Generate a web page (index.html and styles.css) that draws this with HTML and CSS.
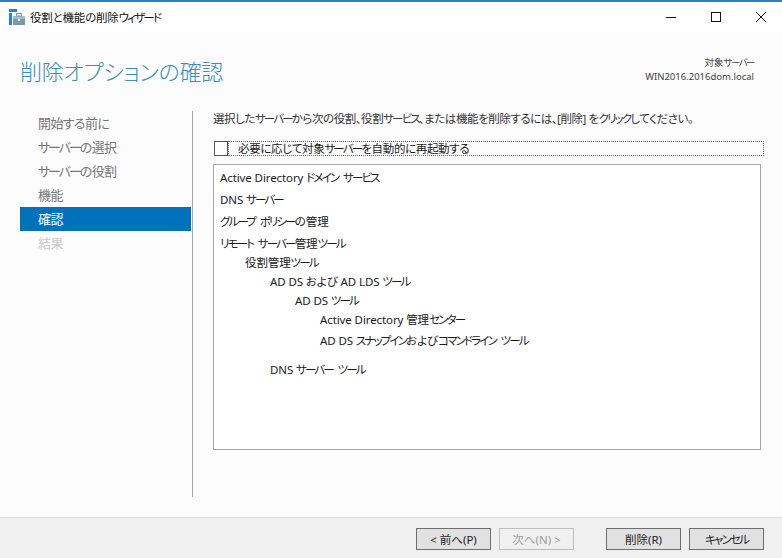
FILE: index.html
```html
<!DOCTYPE html>
<html lang="ja">
<head>
    <meta charset="UTF-8">
    <meta name="viewport" content="width=device-width, initial-scale=1.0">
    <title>役割と機能の削除ウィザード</title>
    <link rel="stylesheet" href="styles.css">
</head>
<body>

    <div class="window">
        <div class="titlebar">
            <svg class="app-icon" width="16" height="16" viewBox="0 0 16 16">
                <rect x="0" y="0" width="8" height="3" fill="#1e88d8"/>
                <rect x="0" y="4" width="3" height="12" fill="#1e88d8"/>
                <rect x="4" y="7" width="12" height="9" fill="#7c98ac"/>
                <rect x="4" y="7" width="12" height="3" fill="#a9bccb"/>
                <rect x="7.5" y="4.5" width="5" height="2.5" fill="none" stroke="#7c98ac"/>
                <rect x="9" y="10" width="2" height="2" fill="#e8eef2"/>
            </svg>
            <span class="window-title">役割と機能の削除<span class="kana">ウィザード</span></span>
            <div class="window-controls">
                <svg width="12" height="12" viewBox="0 0 12 12"><path d="M1 6.5H11" stroke="#111" fill="none"/></svg>
                <svg width="12" height="12" viewBox="0 0 12 12"><rect x="1.5" y="1.5" width="9" height="9" stroke="#111" fill="none"/></svg>
                <svg width="12" height="12" viewBox="0 0 12 12"><path d="M1 1L11 11M11 1L1 11" stroke="#111" fill="none"/></svg>
            </div>
        </div>

        <div class="header">
            <h1>削除オプションの確認</h1>
            <div class="target">
                <div>対象<span class="kana">サーバー</span></div>
                <div>WIN2016.2016dom.local</div>
            </div>
        </div>

        <div class="content">
            <ul class="steps">
                <li>開始する前に</li>
                <li><span class="kana">サーバー</span>の選択</li>
                <li><span class="kana">サーバー</span>の役割</li>
                <li>機能</li>
                <li class="active">確認</li>
                <li class="disabled">結果</li>
            </ul>

            <div class="main">
                <p class="intro">選択した<span class="kana">サーバー</span>から次の役割、役割<span class="kana">サービス</span>、または機能を削除するには、[削除] を<span class="kana">クリック</span>してください。</p>

                <label class="restart">
                    <span class="checkbox"></span>
                    <span class="restart-label">必要に応じて対象<span class="kana">サーバー</span>を自動的に再起動する</span>
                </label>

                <div class="list">
                    <div class="row">Active Directory <span class="kana">ドメイン サービス</span></div>
                    <div class="row">DNS <span class="kana">サーバー</span></div>
                    <div class="row"><span class="kana">グループ ポリシー</span>の管理</div>
                    <div class="row last-top"><span class="kana">リモート サーバー</span>管理<span class="kana">ツール</span></div>
                    <div class="row sub level1">役割管理<span class="kana">ツール</span></div>
                    <div class="row sub level2">AD DS および AD LDS <span class="kana">ツール</span></div>
                    <div class="row sub level3">AD DS <span class="kana">ツール</span></div>
                    <div class="row sub level4">Active Directory 管理<span class="kana">センター</span></div>
                    <div class="row level4 tall">AD DS <span class="kana">スナップイン</span>および<span class="kana">コマンドライン ツール</span></div>
                    <div class="row level2">DNS <span class="kana">サーバー ツール</span></div>
                </div>
            </div>
        </div>

        <div class="footer">
            <button>&lt; 前へ(P)</button>
            <button disabled>次へ(N) &gt;</button>
            <button class="gap">削除(R)</button>
            <button><span class="kana">キャンセル</span></button>
        </div>
    </div>

</body>
</html>
```

FILE: styles.css
```css
* {
    box-sizing: border-box;
}

body {
    margin: 0;
    font-family: "Noto Sans", "Noto Sans CJK JP", sans-serif;
    font-size: 11.5px;
    font-feature-settings: "palt";
    color: #1a1a1a;
    background-color: #fcfcfc;
}

/* katakana runs are much narrower in the original UI font */
.kana {
    letter-spacing: -.16em;
    word-spacing: .3em;
}

.window {
    width: 782px;
    height: 558px;
    display: flex;
    flex-direction: column;
    overflow: hidden;
}

.titlebar {
    height: 32px;
    flex: none;
    display: flex;
    align-items: center;
    padding-left: 9px;
    background-color: white;
    border-top: 2px solid #2b7fc4;
}

.window-title {
    margin-left: 5px;
    letter-spacing: -.2px;
    color: #111;
}

.window-controls {
    margin-left: auto;
    display: flex;
    gap: 33px;
    padding-right: 15px;
}

.header {
    height: 63px;
    flex: none;
    display: flex;
    justify-content: space-between;
    padding: 0 28px 0 20px;
}

h1 {
    margin: 21px 0 0;
    font-size: 22px;
    line-height: 36px;
    font-weight: 300;
    letter-spacing: -.3px;
    color: #3a8fb7;
}

.target {
    margin-top: 24px;
    text-align: right;
    font-size: 9.5px;
    line-height: 14px;
    color: #444;
}

.content {
    height: 422px;
    flex: none;
    display: flex;
    padding: 16px 0 20px 20px;
}

.steps {
    width: 173px;
    margin: 0;
    padding: 0;
    list-style: none;
    border-right: 1px solid #a6a6a6;
    padding-right: 1px;
}

.steps li {
    height: 24px;
    line-height: 24px;
    padding-left: 18px;
    font-size: 13px;
    letter-spacing: -.6px;
    color: #767676;
}

.steps li.active {
    background-color: #0072bc;
    color: white;
}

.steps li.disabled {
    color: #c8c8c8;
}

.main {
    margin-left: 20px;
    width: 548px;
}

.intro {
    margin: 0;
    height: 16px;
    line-height: 16px;
    white-space: nowrap;
    letter-spacing: -.45px;
    color: #333;
}

.restart {
    display: flex;
    margin-top: 14px;
    height: 15px;
}

.checkbox {
    width: 14px;
    height: 15px;
    flex: none;
    margin-left: 1px;
    border: 1px solid #555;
    background-color: white;
}

.restart-label {
    flex: 1;
    margin-right: -3px;
    padding-left: 9px;
    line-height: 13px;
    letter-spacing: -.35px;
    border: 1px dotted #666;
}

.list {
    margin-top: 8px;
    height: 286px;
    padding: 2px 6px;
    background-color: white;
    border: 1px solid #a6a6a6;
}

.row {
    height: 22px;
    line-height: 22px;
    white-space: nowrap;
    letter-spacing: -.1px;
}

.row.last-top {
    height: 20px;
}

.row.sub {
    height: 19px;
    line-height: 19px;
}

.row.tall {
    height: 30px;
    line-height: 24px;
}

.level1 { padding-left: 25px; }
.level2 { padding-left: 50px; }
.level3 { padding-left: 75px; }
.level4 { padding-left: 100px; }

.footer {
    flex: 1;
    display: flex;
    align-items: flex-start;
    gap: 8px;
    padding: 10px 0 0 416px;
    background-color: #f0f0f0;
    border-top: 1px solid #dfdfdf;
}

button {
    width: 75px;
    height: 22px;
    padding: 0;
    font: inherit;
    font-feature-settings: inherit;
    color: #222;
    background-color: #e1e1e1;
    border: 1px solid #6e6e6e;
}

button:disabled {
    color: #9c9c9c;
    background-color: #f0f0f0;
    border-color: #bdbdbd;
}

button.gap {
    margin-left: 24px;
}
```
